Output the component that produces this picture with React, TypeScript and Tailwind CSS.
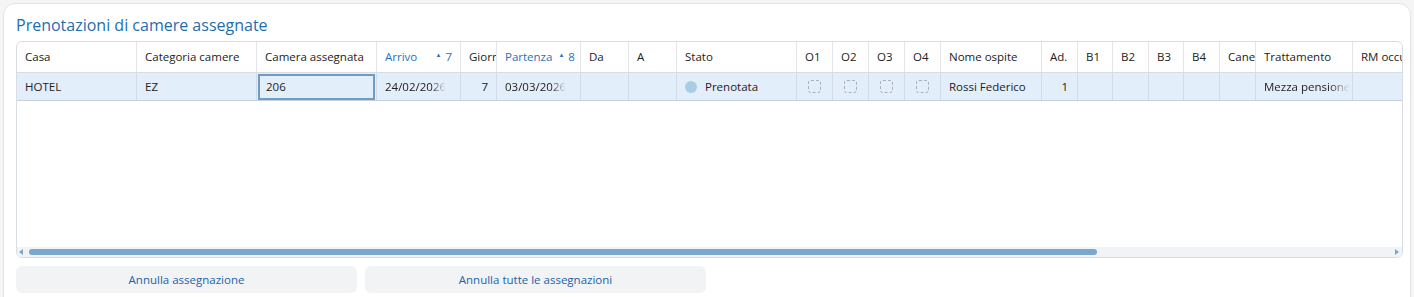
import type { ReactNode } from 'react';

type Col = {
  key: string;
  label: string;
  w: string;
  sort?: string;
};

const COLUMNS: Col[] = [
  { key: 'casa', label: 'Casa', w: 'w-[120px]' },
  { key: 'cat', label: 'Categoria camere', w: 'w-[120px]' },
  { key: 'cam', label: 'Camera assegnata', w: 'w-[120px]' },
  { key: 'arr', label: 'Arrivo', w: 'w-[84px]', sort: '7' },
  { key: 'gio', label: 'Giorni', w: 'w-[36px]' },
  { key: 'par', label: 'Partenza', w: 'w-[84px]', sort: '8' },
  { key: 'da', label: 'Da', w: 'w-[48px]' },
  { key: 'a', label: 'A', w: 'w-[48px]' },
  { key: 'stato', label: 'Stato', w: 'w-[120px]' },
  { key: 'o1', label: 'O1', w: 'w-[36px]' },
  { key: 'o2', label: 'O2', w: 'w-[36px]' },
  { key: 'o3', label: 'O3', w: 'w-[36px]' },
  { key: 'o4', label: 'O4', w: 'w-[36px]' },
  { key: 'nome', label: 'Nome ospite', w: 'w-[101px]' },
  { key: 'ad', label: 'Ad.', w: 'w-[36px]' },
  { key: 'b1', label: 'B1', w: 'w-[35px]' },
  { key: 'b2', label: 'B2', w: 'w-[36px]' },
  { key: 'b3', label: 'B3', w: 'w-[35px]' },
  { key: 'b4', label: 'B4', w: 'w-[36px]' },
  { key: 'cane', label: 'Cane', w: 'w-[36px]' },
  { key: 'tratt', label: 'Trattamento', w: 'w-[97px]' },
  { key: 'rm', label: 'RM occupazione', w: 'w-[120px]' },
];

// fades the end of a clipped value, like the grid does
const fade = '[mask-image:linear-gradient(to_right,black_78%,transparent_100%)]';

function Check() {
  return <span className="block h-[13px] w-[13px] rounded-[3px] border border-dashed border-[#a9b0b8]" />;
}

function cellFor(key: string): ReactNode {
  switch (key) {
    case 'casa':
      return <span className="pl-[8px]">HOTEL</span>;
    case 'cat':
      return <span className="pl-[8px]">EZ</span>;
    case 'cam':
      return (
        <span className="mx-[1px] flex h-[26px] w-full items-center border-2 border-[#6e9cc6] pl-[6px]">206</span>
      );
    case 'arr':
      return <span className={`overflow-hidden whitespace-nowrap pl-[8px] ${fade}`}>24/02/2026</span>;
    case 'gio':
      return <span className="w-full pr-[8px] text-right">7</span>;
    case 'par':
      return <span className={`overflow-hidden whitespace-nowrap pl-[8px] ${fade}`}>03/03/2026</span>;
    case 'stato':
      return (
        <span className="flex items-center gap-[8px] pl-[8px]">
          <span className="h-[12px] w-[12px] rounded-full bg-[#a9cde5]" />
          Prenotata
        </span>
      );
    case 'o1':
    case 'o2':
    case 'o3':
    case 'o4':
      return (
        <span className="flex w-full justify-center">
          <Check />
        </span>
      );
    case 'nome':
      return <span className="whitespace-nowrap pl-[8px]">Rossi Federico</span>;
    case 'ad':
      return <span className="w-full pr-[9px] text-right text-[#222]">1</span>;
    case 'tratt':
      return <span className={`overflow-hidden whitespace-nowrap pl-[8px] ${fade}`}>Mezza pensione</span>;
    default:
      return null;
  }
}

export default function App() {
  return (
    <div className="h-[297px] overflow-hidden bg-[#f5f5f5] pl-[3px] pt-[3px] font-['Open_Sans',sans-serif] text-[11.5px] text-[#222]">
      <div className="h-[320px] w-[1408px] rounded-t-[12px] border border-[#e3e3e3] bg-white px-[12px] pt-[10px]">
        <h2 className="mb-[4px] h-[23px] text-[16px] leading-[23px] text-[#1f6db0]">Prenotazioni di camere assegnate</h2>

        {/* grid */}
        <div className="flex h-[217px] w-[1387px] flex-col overflow-hidden rounded-[6px] border border-[#d8dde3]">
          <div className="flex h-[31px] shrink-0 border-b border-[#d8dde3]">
            {COLUMNS.map((c) => (
              <div
                key={c.key}
                className={`flex ${c.w} shrink-0 items-center overflow-hidden whitespace-nowrap border-r border-[#e2e6ea] pl-[8px] ${
                  c.sort ? 'justify-between gap-[6px] pr-[8px] text-[#1f72bd]' : ''
                }`}
              >
                <span>{c.label}</span>
                {c.sort && (
                  <span className="flex items-center gap-[4px]">
                    <span className="mb-[4px] text-[6px] leading-none">▲</span>
                    {c.sort}
                  </span>
                )}
              </div>
            ))}
          </div>

          <div className="flex h-[28px] shrink-0 border-b border-[#c6d0db] bg-[#e3eefb]">
            {COLUMNS.map((c) => (
              <div key={c.key} className={`flex ${c.w} shrink-0 items-center overflow-hidden border-r border-[#d3dce6]`}>
                {cellFor(c.key)}
              </div>
            ))}
          </div>

          <div className="flex-1" />

          {/* horizontal scrollbar */}
          <div className="flex h-[10px] shrink-0 items-center bg-[#f1f3f6] px-[2px]">
            <span className="h-0 w-0 border-y-[3px] border-r-[4px] border-y-transparent border-r-[#7ba6cb]" />
            <span className="ml-[6px] h-[6px] w-[1068px] rounded-full bg-[#7ba7cc]" />
            <span className="flex-1" />
            <span className="mr-[1px] h-0 w-0 border-y-[3px] border-l-[4px] border-y-transparent border-l-[#7ba6cb]" />
          </div>
        </div>

        <div className="mt-[8px] flex gap-[8px]">
          <button className="h-[27px] w-[341px] rounded-[6px] bg-[#f2f3f5] text-[11.5px] text-[#1d62a6]">
            Annulla assegnazione
          </button>
          <button className="h-[27px] w-[341px] rounded-[6px] bg-[#f2f3f5] text-[11.5px] text-[#1d62a6]">
            Annulla tutte le assegnazioni
          </button>
        </div>
      </div>
    </div>
  );
}
